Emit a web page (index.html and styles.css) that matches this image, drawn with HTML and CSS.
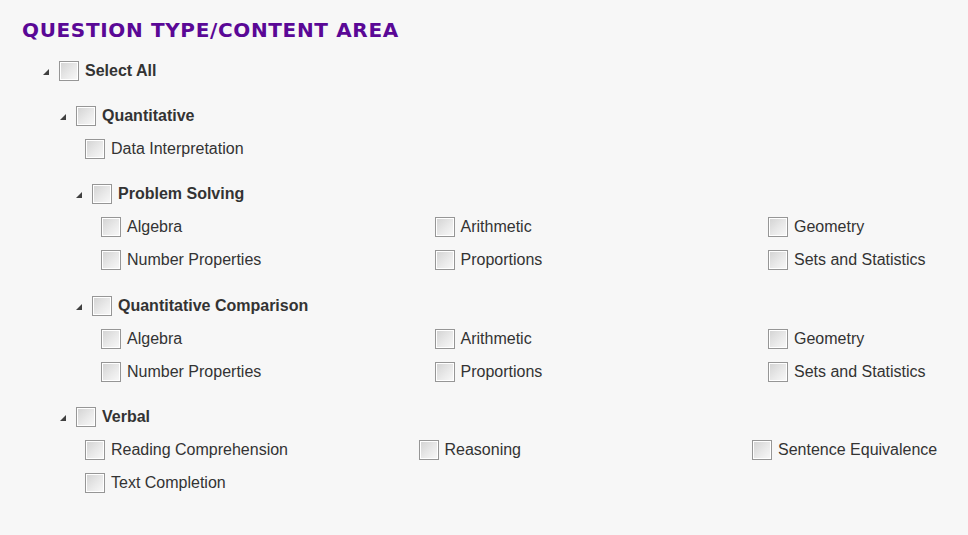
FILE: index.html
```html
<!DOCTYPE html>
<html lang="en">
<head>
<meta charset="utf-8">
<title>Question Type / Content Area</title>
<link rel="stylesheet" href="styles.css">
</head>
<body>
<div class="panel">
  <h2 class="title">QUESTION TYPE/CONTENT AREA</h2>
  <ul class="tree">
    <li class="node">
      <div class="row head"><span class="toggle"><svg width="6" height="6" viewBox="0 0 6 6"><polygon points="6,0 6,6 0,6"/></svg></span><span class="cb"></span><span class="label">Select All</span></div>
      <ul class="children">
        <li class="node">
          <div class="row head"><span class="toggle"><svg width="6" height="6" viewBox="0 0 6 6"><polygon points="6,0 6,6 0,6"/></svg></span><span class="cb"></span><span class="label">Quantitative</span></div>
          <ul class="leaves">
            <li class="row leaf"><span class="cb"></span><span class="label">Data Interpretation</span></li>
          </ul>
          <ul class="children inner">
            <li class="node">
              <div class="row head"><span class="toggle"><svg width="6" height="6" viewBox="0 0 6 6"><polygon points="6,0 6,6 0,6"/></svg></span><span class="cb"></span><span class="label">Problem Solving</span></div>
              <ul class="leaves">
                <li class="row leaf"><span class="cb"></span><span class="label">Algebra</span></li>
                <li class="row leaf"><span class="cb"></span><span class="label">Arithmetic</span></li>
                <li class="row leaf"><span class="cb"></span><span class="label">Geometry</span></li>
                <li class="row leaf"><span class="cb"></span><span class="label">Number Properties</span></li>
                <li class="row leaf"><span class="cb"></span><span class="label">Proportions</span></li>
                <li class="row leaf"><span class="cb"></span><span class="label">Sets and Statistics</span></li>
              </ul>
            </li>
            <li class="node">
              <div class="row head"><span class="toggle"><svg width="6" height="6" viewBox="0 0 6 6"><polygon points="6,0 6,6 0,6"/></svg></span><span class="cb"></span><span class="label">Quantitative Comparison</span></div>
              <ul class="leaves">
                <li class="row leaf"><span class="cb"></span><span class="label">Algebra</span></li>
                <li class="row leaf"><span class="cb"></span><span class="label">Arithmetic</span></li>
                <li class="row leaf"><span class="cb"></span><span class="label">Geometry</span></li>
                <li class="row leaf"><span class="cb"></span><span class="label">Number Properties</span></li>
                <li class="row leaf"><span class="cb"></span><span class="label">Proportions</span></li>
                <li class="row leaf"><span class="cb"></span><span class="label">Sets and Statistics</span></li>
              </ul>
            </li>
          </ul>
        </li>
        <li class="node">
          <div class="row head"><span class="toggle"><svg width="6" height="6" viewBox="0 0 6 6"><polygon points="6,0 6,6 0,6"/></svg></span><span class="cb"></span><span class="label">Verbal</span></div>
          <ul class="leaves">
            <li class="row leaf"><span class="cb"></span><span class="label">Reading Comprehension</span></li>
            <li class="row leaf"><span class="cb"></span><span class="label">Reasoning</span></li>
            <li class="row leaf"><span class="cb"></span><span class="label">Sentence Equivalence</span></li>
            <li class="row leaf"><span class="cb"></span><span class="label">Text Completion</span></li>
          </ul>
        </li>
      </ul>
    </li>
  </ul>
</div>
</body>
</html>
```
FILE: styles.css
```css
html, body {
  margin: 0;
  padding: 0;
  background: #f7f7f7;
}

body {
  font-family: "Liberation Sans", Arial, sans-serif;
  font-size: 16px;
  color: #333333;
}

.panel {
  padding: 18px 0 0 22px;
  height: 535px;
  box-sizing: border-box;
  overflow: hidden;
}

.title {
  margin: 0;
  font-family: "DejaVu Sans", Verdana, sans-serif;
  font-weight: bold;
  font-size: 20px;
  line-height: 24px;
  letter-spacing: 0.65px;
  color: #5a0896;
}

.tree,
.children,
.leaves {
  list-style: none;
  margin: 0;
  padding: 0;
}

.tree {
  padding-left: 19px;
}

.children {
  padding-left: 17px;
}

.children.inner {
  padding-left: 16px;
}

.leaves {
  padding-left: 27px;
  display: grid;
  grid-template-columns: repeat(3, 333.5px);
}

.row {
  display: flex;
  align-items: center;
  height: 33px;
}

.head {
  margin-top: 12px;
  font-weight: bold;
}

.children.inner > .node + .node > .head {
  margin-top: 13px;
}

.toggle {
  width: 18px;
  flex: none;
  display: flex;
  align-items: center;
  padding-left: 2px;
  box-sizing: border-box;
}

.toggle svg {
  display: block;
  margin-top: 2px;
  fill: #404040;
}

.cb {
  flex: none;
  width: 20px;
  height: 20px;
  box-sizing: border-box;
  border: 1px solid #969696;
  box-shadow: inset 0 0 0 1px #ffffff;
  background: linear-gradient(135deg, #d2d2d2 0%, #e9e9e9 55%, #f9f9f9 100%);
}

.label {
  margin-left: 6px;
  white-space: nowrap;
}
```
